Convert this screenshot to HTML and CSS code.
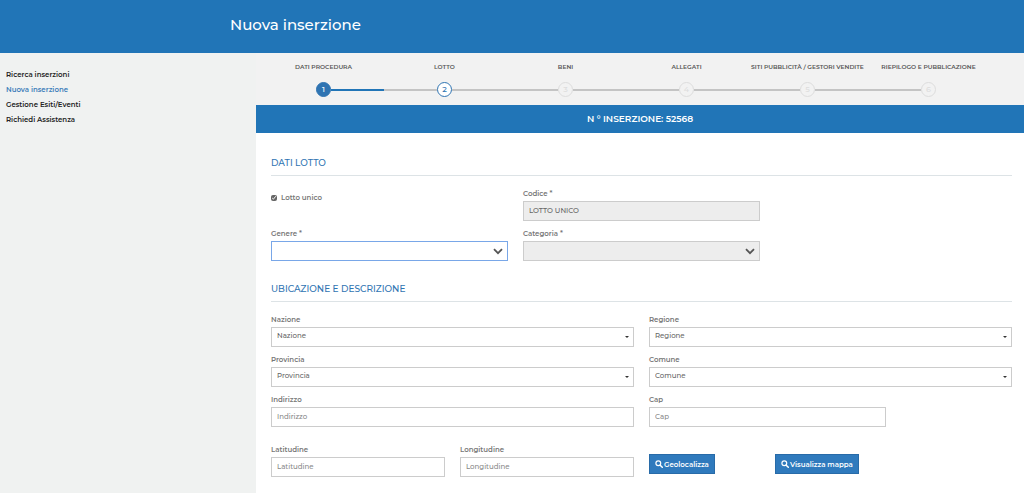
FILE: index.html
```html
<!DOCTYPE html>
<html lang="it">
<head>
<meta charset="utf-8">
<meta name="viewport" content="width=device-width, initial-scale=1">
<title>Nuova inserzione</title>
<link rel="stylesheet" href="styles.css">
</head>
<body>
<header class="topbar"><h1 class="page-title">Nuova inserzione</h1></header>
<div class="layout">
  <nav class="sidebar">
    <a class="side-link" href="#">Ricerca inserzioni</a>
    <a class="side-link active" href="#">Nuova inserzione</a>
    <a class="side-link" href="#">Gestione Esiti/Eventi</a>
    <a class="side-link" href="#">Richiedi Assistenza</a>
  </nav>
  <main class="main">
    <ol class="steps">
      <li class="step done"><span class="step-name">DATI PROCEDURA</span><span class="track"><span class="dot">1</span></span></li>
      <li class="step current"><span class="step-name">LOTTO</span><span class="track"><span class="dot">2</span></span></li>
      <li class="step"><span class="step-name">BENI</span><span class="track"><span class="dot">3</span></span></li>
      <li class="step"><span class="step-name">ALLEGATI</span><span class="track"><span class="dot">4</span></span></li>
      <li class="step"><span class="step-name">SITI PUBBLICITÀ / GESTORI VENDITE</span><span class="track"><span class="dot">5</span></span></li>
      <li class="step"><span class="step-name">RIEPILOGO E PUBBLICAZIONE</span><span class="track"><span class="dot">6</span></span></li>
    </ol>
    <div class="banner">N ° INSERZIONE: 52568</div>
    <form class="form">
      <section class="section">
        <h2 class="section-title">DATI LOTTO</h2>
        <div class="grid">
          <div class="check span-4">
            <input class="checkbox" type="checkbox" id="unico" checked>
            <label class="label" for="unico">Lotto unico</label>
          </div>
          <div class="field span-4">
            <label class="label" for="codice">Codice *</label>
            <input class="control" id="codice" type="text" value="LOTTO UNICO" disabled>
          </div>
          <div class="field span-4 first">
            <label class="label" for="genere">Genere *</label>
            <div class="select-wrap">
              <select class="control focused" id="genere"><option></option></select>
              <svg class="chevron" viewBox="0 0 10 7"><path d="M1 1.2 5 5.2 9 1.2" fill="none" stroke="currentColor" stroke-width="1.8"/></svg>
            </div>
          </div>
          <div class="field span-4">
            <label class="label" for="categoria">Categoria *</label>
            <div class="select-wrap">
              <select class="control" id="categoria" disabled><option></option></select>
              <svg class="chevron" viewBox="0 0 10 7"><path d="M1 1.2 5 5.2 9 1.2" fill="none" stroke="currentColor" stroke-width="1.8"/></svg>
            </div>
          </div>
        </div>
      </section>
      <section class="section">
        <h2 class="section-title">UBICAZIONE E DESCRIZIONE</h2>
        <div class="grid">
          <div class="field span-6">
            <label class="label" for="nazione">Nazione</label>
            <div class="select-wrap">
              <select class="control pick" id="nazione"><option>Nazione</option></select>
              <svg class="caret" viewBox="0 0 4 2"><path d="M0 0h4L2 2z" fill="currentColor"/></svg>
            </div>
          </div>
          <div class="field span-6">
            <label class="label" for="regione">Regione</label>
            <div class="select-wrap">
              <select class="control pick" id="regione"><option>Regione</option></select>
              <svg class="caret" viewBox="0 0 4 2"><path d="M0 0h4L2 2z" fill="currentColor"/></svg>
            </div>
          </div>
          <div class="field span-6">
            <label class="label" for="provincia">Provincia</label>
            <div class="select-wrap">
              <select class="control pick" id="provincia"><option>Provincia</option></select>
              <svg class="caret" viewBox="0 0 4 2"><path d="M0 0h4L2 2z" fill="currentColor"/></svg>
            </div>
          </div>
          <div class="field span-6">
            <label class="label" for="comune">Comune</label>
            <div class="select-wrap">
              <select class="control pick" id="comune"><option>Comune</option></select>
              <svg class="caret" viewBox="0 0 4 2"><path d="M0 0h4L2 2z" fill="currentColor"/></svg>
            </div>
          </div>
          <div class="field span-6">
            <label class="label" for="indirizzo">Indirizzo</label>
            <input class="control" id="indirizzo" type="text" placeholder="Indirizzo">
          </div>
          <div class="field span-4">
            <label class="label" for="cap">Cap</label>
            <input class="control" id="cap" type="text" placeholder="Cap">
          </div>
        </div>
        <div class="grid coords">
          <div class="field span-3">
            <label class="label" for="lat">Latitudine</label>
            <input class="control" id="lat" type="text" placeholder="Latitudine">
          </div>
          <div class="field span-3">
            <label class="label" for="lon">Longitudine</label>
            <input class="control" id="lon" type="text" placeholder="Longitudine">
          </div>
          <div class="action span-2">
            <button class="button" type="button"><svg class="search" viewBox="0 0 8 8"><path d="M5.2 5.2 7.3 7.3" stroke="currentColor" stroke-width="1.5" stroke-linecap="round"/><circle cx="3.3" cy="3.3" r="2.4" fill="none" stroke="currentColor" stroke-width="1.2"/></svg>Geolocalizza</button>
          </div>
          <div class="action span-2">
            <button class="button" type="button"><svg class="search" viewBox="0 0 8 8"><path d="M5.2 5.2 7.3 7.3" stroke="currentColor" stroke-width="1.5" stroke-linecap="round"/><circle cx="3.3" cy="3.3" r="2.4" fill="none" stroke="currentColor" stroke-width="1.2"/></svg>Visualizza mappa</button>
          </div>
        </div>
      </section>
    </form>
  </main>
</div>
</body>
</html>
```
FILE: styles.css
```css
* { box-sizing: border-box; }

body {
  margin: 0;
  min-height: 100vh;
  display: flex;
  flex-direction: column;
  font-family: Montserrat, Inter, "Open Sans", sans-serif;
  font-size: 7px;
  font-weight: 500;
  color: #666;
  background: #fff;
}

.topbar {
  padding: 15px 16px 18px 230px;
  background: #2175b7;
}

.page-title {
  margin: 0;
  font-size: 15px;
  line-height: 20px;
  font-weight: 500;
  color: #fff;
}

.layout {
  flex: 1;
  display: grid;
  grid-template-columns: 1fr 3fr;
}

.sidebar {
  display: flex;
  flex-direction: column;
  padding: 14px 6px;
  background: #f0f2f1;
}

.side-link {
  font-size: 7px;
  line-height: 15px;
  font-weight: 600;
  color: #222;
  text-decoration: none;
}

.side-link.active { color: #3c7db9; }

.main { min-width: 0; }

.steps {
  display: grid;
  grid-template-columns: repeat(6, 1fr);
  margin: 0;
  padding: 9px 35px 8px 7px;
  list-style: none;
  background: #f2f2f2;
}

.step { min-width: 0; }

.step-name {
  display: flex;
  justify-content: center;
  margin-bottom: 10px;
  font-size: 6px;
  line-height: 10px;
  font-weight: 600;
  color: #555;
  white-space: nowrap;
}

.track {
  display: flex;
  align-items: center;
}

.track::before,
.track::after {
  content: "";
  flex: 1;
  height: 2px;
  background: #c4c4c4;
}

.step:first-child .track::before,
.step:last-child .track::after { background: transparent; }

.step.done .track::after { background: #2175b7; }

.dot {
  width: 15px;
  height: 15px;
  border: 1px solid #ddd;
  border-radius: 50%;
  font-size: 8px;
  line-height: 13px;
  text-align: center;
  color: #ddd;
  background: #f2f2f2;
}

.done .dot {
  border-color: #2f74b2;
  color: #fff;
  background: #2f74b2;
}

.current .dot {
  border-color: #2f74b2;
  color: #2f74b2;
  background: #fff;
}

.banner {
  padding: 7px 0;
  font-size: 9px;
  line-height: 14px;
  font-weight: 600;
  text-align: center;
  color: #fff;
  background: #2175b7;
}

.form { padding: 22px 12px 16px 15px; }

.section + .section { margin-top: 20px; }

.section-title {
  margin: 0 0 10px;
  padding-bottom: 4px;
  border-bottom: 1px solid #dde3e6;
  font-size: 9px;
  line-height: 16px;
  font-weight: 500;
  color: #2f74b2;
}

.grid {
  display: grid;
  grid-template-columns: repeat(12, 1fr);
  gap: 5px 15px;
}

.coords { margin-top: 15px; }

.span-2 { grid-column: span 2; }
.span-3 { grid-column: span 3; }
.span-4 { grid-column: span 4; }
.span-6 { grid-column: span 6; }
.first { grid-column: 1 / span 4; }

.label {
  display: block;
  font-size: 7px;
  line-height: 14px;
  font-weight: 600;
  color: #777;
}

.field .label { padding-top: 1px; }

.check {
  display: flex;
  align-items: center;
  align-self: start;
  gap: 4px;
  padding-top: 5px;
}

.checkbox {
  width: 6px;
  height: 6px;
  margin: 0;
  accent-color: #666;
}

.control {
  display: block;
  appearance: none;
  width: 100%;
  height: 20px;
  margin: 0;
  padding: 0 5px 1px;
  border: 1px solid #ccc;
  border-radius: 0;
  outline: none;
  font: inherit;
  font-size: 7px;
  color: #666;
  background: #fff;
}

.control:disabled {
  color: #666;
  background: #ededed;
  opacity: 1;
}

.control::placeholder {
  color: #888;
  opacity: 1;
}

.control.focused { border-color: #79a7e8; }

.control.pick { padding-bottom: 4px; }

.select-wrap { position: relative; }

.chevron,
.caret {
  position: absolute;
  pointer-events: none;
}

.chevron {
  top: 7px;
  right: 5px;
  width: 10px;
  height: 7px;
  color: #555;
}

.caret {
  top: 9px;
  right: 5px;
  width: 4px;
  height: 2px;
  color: #333;
}

.action { padding-top: 12px; }

.button {
  display: flex;
  align-items: center;
  gap: 1px;
  height: 20px;
  padding: 0 5px;
  border: 1px solid #286ba8;
  font: inherit;
  font-size: 7px;
  font-weight: 600;
  white-space: nowrap;
  color: #fff;
  background: #2f7abd;
}

.search {
  width: 8px;
  height: 8px;
}
```
